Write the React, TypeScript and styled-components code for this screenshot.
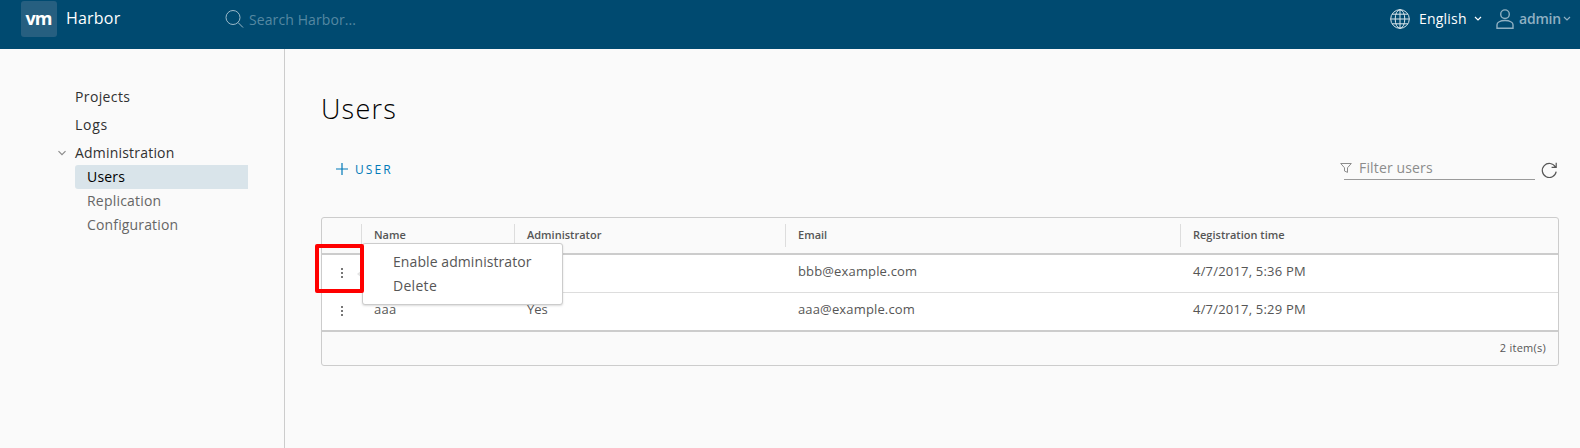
import React from 'react';
import styled, { createGlobalStyle } from 'styled-components';

const GlobalStyle = createGlobalStyle`
  * { box-sizing: border-box; }
  body {
    margin: 0;
    background: #fafafa;
    color: #565656;
    font-family: 'Open Sans', 'Noto Sans', sans-serif;
    font-size: 14px;
    line-height: 24px;
    overflow: hidden;
  }
`;

const Page = styled.div`
  display: flex;
  flex-direction: column;
  height: 448px;
`;

const Header = styled.header`
  display: flex;
  align-items: flex-start;
  height: 49px;
  flex: none;
  padding-left: 21px;
  background: #004a70;
  color: #fff;
  white-space: nowrap;
`;

const Logo = styled.div`
  width: 36px;
  height: 36px;
  margin-top: 1px;
  border-radius: 3px;
  background: #265f80;
  font-family: 'Open Sans', sans-serif;
  font-size: 18px;
  font-weight: 700;
  line-height: 34px;
  letter-spacing: -1px;
  text-align: center;
  text-indent: -1px;
`;

const Brand = styled.span`
  width: 159px;
  margin: 6px 0 0 9px;
  font-size: 16px;
  letter-spacing: 0.2px;
`;

const SearchField = styled.div`
  display: flex;
  flex: 1;
  padding-top: 10px;
  color: #5588a2;
  letter-spacing: 0.1px;
`;

const SearchText = styled.span`
  margin: -2px 0 0 5px;
`;

const HeaderMenu = styled.div<{ $dim?: boolean; $width: number }>`
  display: flex;
  width: ${p => p.$width}px;
  padding-top: 9px;
  color: ${p => (p.$dim ? '#8fb0c2' : '#fff')};
  font-weight: ${p => (p.$dim ? 600 : 400)};
`;

const MenuLabel = styled.span<{ $width: number; $gap: number; $spacing: number }>`
  width: ${p => p.$width}px;
  margin: -2px 0 0 ${p => p.$gap}px;
  letter-spacing: ${p => p.$spacing}px;
`;

const Caret = styled.svg`
  width: 8px;
  height: 6px;
  margin-top: 7px;
  flex: none;
  fill: none;
  stroke: currentColor;
  stroke-width: 1.2;
`;

const LineIcon = styled.svg`
  flex: none;
  fill: none;
  stroke: currentColor;
`;

const Body = styled.div`
  display: flex;
  flex: 1;
`;

const Sidebar = styled.nav`
  display: flex;
  flex-direction: column;
  width: 285px;
  padding: 36px 36px 0 57px;
  border-right: 1px solid #ccc;
`;

const NavItem = styled.div<{ $spacing: number }>`
  display: flex;
  height: 28px;
  padding-left: 18px;
  color: #313131;
  letter-spacing: ${p => p.$spacing}px;
`;

const NavGroup = styled(NavItem)`
  height: 24px;
  padding-left: 0;
  gap: 8px;

  svg {
    width: 10px;
    height: 7px;
    margin-top: 9px;
    color: #8a8a8a;
    stroke-width: 1;
  }
`;

const SubItem = styled.div<{ $active?: boolean; $spacing: number }>`
  height: 24px;
  margin-left: 18px;
  width: 173px;
  padding-left: 12px;
  border-radius: 3px 0 0 3px;
  background: ${p => (p.$active ? '#d9e4ea' : 'transparent')};
  color: ${p => (p.$active ? '#000' : '#666')};
  letter-spacing: ${p => p.$spacing}px;
`;

const Main = styled.main`
  display: flex;
  flex-direction: column;
  flex: 1;
  padding: 41px 21px 0 36px;
`;

const Title = styled.h1`
  margin: 0;
  height: 67px;
  color: #000;
  font-size: 27px;
  font-weight: 300;
  line-height: 37px;
  letter-spacing: 1.2px;
`;

const Toolbar = styled.div`
  display: flex;
  height: 60px;
  justify-content: space-between;
`;

const AddButton = styled.button`
  display: flex;
  align-items: flex-start;
  height: 24px;
  margin: 0;
  padding: 6px 0 0 15px;
  border: 0;
  background: none;
  color: #0079b8;
  font: inherit;
  font-size: 12px;
  letter-spacing: 2.1px;
  line-height: 14px;

  span { margin-left: 7px; }
`;

const FilterGroup = styled.div`
  display: flex;
  align-items: flex-start;
  padding-right: 1px;
`;

const FilterField = styled.div`
  display: flex;
  width: 194px;
  height: 23px;
  color: #8c8c8c;
  background: linear-gradient(#9a9a9a, #9a9a9a) 3px 100% / 191px 1px no-repeat;
  letter-spacing: 0.15px;

  span { margin: -1px 0 0 7px; }
  svg { margin: 5px 0 0 -1px; }
`;

const Refresh = styled(LineIcon)`
  margin: 5px 0 0 6px;
  color: #565656;
`;

const Grid = styled.div`
  position: relative;
  width: 1238px;
  height: 149px;
  border: 1px solid #ccc;
  border-radius: 3px;
`;

const columns = '39px 153px 271px 395px 1fr';

const HeadRow = styled.div`
  display: grid;
  grid-template-columns: ${columns};
  height: 37px;
  padding-top: 6px;
  border-bottom: 2px solid #ccc;
`;

const HeadCell = styled.div`
  height: 23px;
  padding-left: 12px;
  border-left: 1px solid #ddd;
  font-size: 11px;
  font-weight: 600;
  line-height: 22px;
`;

const Row = styled.div<{ $last?: boolean }>`
  display: grid;
  grid-template-columns: ${columns};
  height: ${p => (p.$last ? 39 : 38)}px;
  padding-top: 4px;
  background: #fff;
  border-bottom: ${p => (p.$last ? '2px solid #ccc' : '1px solid #ddd')};
`;

const Cell = styled.div<{ $spacing?: number }>`
  padding-left: 13px;
  font-size: 13px;
  letter-spacing: ${p => p.$spacing ?? 0}px;
`;

const Kebab = styled.svg`
  width: 4px;
  height: 12px;
  margin: 8px 0 0 18px;
  fill: #777;
`;

const Footer = styled.div`
  padding: 5px 12px 0 0;
  font-size: 11px;
  line-height: 22px;
  letter-spacing: 0.25px;
  text-align: right;
`;

const ActionMenu = styled.div`
  position: absolute;
  top: 25px;
  left: 40px;
  width: 201px;
  height: 62px;
  padding: 6px 0 0 30px;
  border: 1px solid #ccc;
  border-radius: 3px;
  background: #fff;
  box-shadow: 0 1px 2px rgba(115, 115, 115, 0.25);
`;

const Action = styled.div<{ $spacing: number }>`
  letter-spacing: ${p => p.$spacing}px;
`;

const Pointer = styled.svg`
  position: absolute;
  left: -6px;
  top: 26px;
  width: 5px;
  height: 8px;
  fill: #e4e4e4;
`;

const Highlight = styled.div`
  position: absolute;
  top: 26px;
  left: -7px;
  width: 49px;
  height: 49px;
  border: 4px solid #f00;
  border-radius: 2px;
`;

const users = [
  { name: '', admin: '', email: 'bbb@example.com', time: '4/7/2017, 5:36 PM' },
  { name: 'aaa', admin: 'Yes', email: 'aaa@example.com', time: '4/7/2017, 5:29 PM' },
];

const Chevron = () => (
  <Caret viewBox="0 0 8 6"><path d="M1 1l3 3 3-3" /></Caret>
);

const Dots = () => (
  <Kebab viewBox="0 0 4 12">
    <rect x="1" y="1" width="2" height="2" />
    <rect x="1" y="5" width="2" height="2" />
    <rect x="1" y="9" width="2" height="2" />
  </Kebab>
);

export default function App() {
  return (
    <Page>
      <GlobalStyle />
      <Header>
        <Logo>vm</Logo>
        <Brand>Harbor</Brand>
        <SearchField>
          <LineIcon width="19" height="19" viewBox="0 0 19 19" color="#9bb9c9">
            <circle cx="8" cy="7.5" r="7" />
            <path d="M13 12.5l5 5" />
          </LineIcon>
          <SearchText>Search Harbor...</SearchText>
        </SearchField>
        <HeaderMenu $width={106}>
          <LineIcon width="20" height="20" viewBox="0 0 20 20" color="#dbe6ec">
            <circle cx="10" cy="10" r="9.3" />
            <ellipse cx="10" cy="10" rx="4.8" ry="9.3" />
            <path d="M10 .7v18.6M.7 10h18.6M2.2 5.2h15.6M2.2 14.8h15.6" />
          </LineIcon>
          <MenuLabel $width={55} $gap={9} $spacing={0.2}>English</MenuLabel>
          <Chevron />
        </HeaderMenu>
        <HeaderMenu $dim $width={84}>
          <LineIcon width="18" height="20" viewBox="0 0 18 20" strokeWidth="1.4">
            <circle cx="9" cy="5.2" r="4.3" />
            <path d="M1 19.2v-3.4c0-2.4 3.2-4.3 8-4.3s8 1.9 8 4.3v3.4z" />
          </LineIcon>
          <MenuLabel $width={44} $gap={5} $spacing={-0.2}>admin</MenuLabel>
          <Chevron />
        </HeaderMenu>
      </Header>
      <Body>
        <Sidebar>
          <NavItem $spacing={0.38}>Projects</NavItem>
          <NavItem $spacing={0.7}>Logs</NavItem>
          <NavGroup $spacing={0.2}><Chevron />Administration</NavGroup>
          <SubItem $active $spacing={0.2}>Users</SubItem>
          <SubItem $spacing={0.2}>Replication</SubItem>
          <SubItem $spacing={0.15}>Configuration</SubItem>
        </Sidebar>
        <Main>
          <Title>Users</Title>
          <Toolbar>
            <AddButton>
              <LineIcon width="12" height="12" viewBox="0 0 12 12" strokeWidth="1.2">
                <path d="M6 0v12M0 6h12" />
              </LineIcon>
              <span>USER</span>
            </AddButton>
            <FilterGroup>
              <FilterField>
                <LineIcon width="12" height="11" viewBox="0 0 12 11">
                  <path d="M.7 1.5h10.6L7.5 5.8v4.6L4.5 9V5.8z" />
                </LineIcon>
                <span>Filter users</span>
              </FilterField>
              <Refresh width="17" height="17" viewBox="0 0 17 17" strokeWidth="1.2">
                <path d="M15.2 9.7A7 7 0 1 1 14.4 5M15.2.8v4.6h-4.6" />
              </Refresh>
            </FilterGroup>
          </Toolbar>
          <Grid>
            <HeadRow>
              <div />
              <HeadCell>Name</HeadCell>
              <HeadCell>Administrator</HeadCell>
              <HeadCell>Email</HeadCell>
              <HeadCell>Registration time</HeadCell>
            </HeadRow>
            {users.map((u, i) => (
              <Row key={u.email} $last={i === users.length - 1}>
                <Dots />
                <Cell $spacing={0.3}>{u.name}</Cell>
                <Cell>{u.admin}</Cell>
                <Cell $spacing={0.15}>{u.email}</Cell>
                <Cell $spacing={0.2}>{u.time}</Cell>
              </Row>
            ))}
            <Footer>2 item(s)</Footer>
            <ActionMenu>
              <Pointer viewBox="0 0 5 8"><path d="M5 0v8L0 4z" /></Pointer>
              <Action $spacing={0.08}>Enable administrator</Action>
              <Action $spacing={0.3}>Delete</Action>
            </ActionMenu>
            <Highlight />
          </Grid>
        </Main>
      </Body>
    </Page>
  );
}
